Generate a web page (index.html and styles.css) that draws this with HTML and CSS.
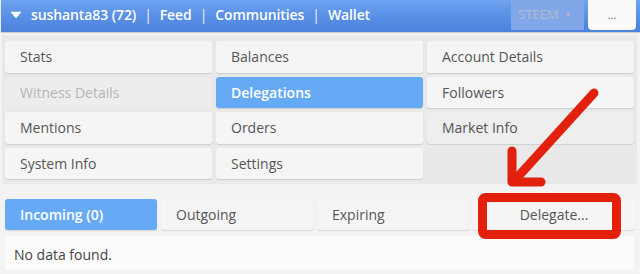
FILE: index.html
```html
<!DOCTYPE html>
<html>
<head>
<meta charset="utf-8">
<link rel="stylesheet" href="styles.css">
</head>
<body>
<header class="topbar">
  <nav class="crumbs">
    <svg class="caret" width="12" height="8" viewBox="0 0 12 8"><path d="M1 1.5 Q0.5 0.8 1.4 0.8 H10.6 Q11.5 0.8 11 1.5 L6.6 6.8 Q6 7.5 5.4 6.8 Z" fill="#fff"/></svg>
    <span>sushanta83 (72)</span><span class="sep">|</span><span>Feed</span><span class="sep">|</span><span>Communities</span><span class="sep">|</span><span>Wallet</span>
  </nav>
  <div class="coin">STEEM <span class="coin-caret">▾</span></div>
  <div class="more">...</div>
</header>

<section class="menu-panel">
  <div class="btn">Stats</div>
  <div class="btn">Balances</div>
  <div class="btn">Account Details</div>
  <div class="btn disabled">Witness Details</div>
  <div class="btn active">Delegations</div>
  <div class="btn">Followers</div>
  <div class="btn">Mentions</div>
  <div class="btn">Orders</div>
  <div class="btn hover">Market Info</div>
  <div class="btn">System Info</div>
  <div class="btn">Settings</div>
  <div class="empty"></div>
</section>

<section class="tabs">
  <div class="btn active">Incoming (0)</div>
  <div class="btn">Outgoing</div>
  <div class="btn">Expiring</div>
  <div class="btn center">Delegate...</div>
</section>

<div class="content">No data found.</div>

<svg class="annot" width="640" height="274" viewBox="0 0 640 274">
  <g stroke="#e2200c" stroke-width="9" stroke-linecap="round" stroke-linejoin="round" fill="none">
    <line x1="594" y1="93" x2="515" y2="180"/>
    <polyline points="512,151 512,182 541,182"/>
    <rect x="482.5" y="197.5" width="134" height="37" rx="3"/>
  </g>
</svg>
</body>
</html>
```

FILE: styles.css
```css
* { box-sizing: border-box; }
html, body { margin: 0; padding: 0; }
body {
  width: 640px;
  height: 274px;
  overflow: hidden;
  background: #f3f3f3;
  font-family: "Open Sans", "Noto Sans", sans-serif;
  font-size: 14px;
  color: #555;
  position: relative;
}
.topbar {
  height: 32px;
  margin-left: 1px;
  display: flex;
  align-items: stretch;
  background: linear-gradient(180deg, #6ea4f0 0%, #5a90e6 50%, #4d82dd 100%);
  box-shadow: 0 1px 1px rgba(0,0,0,0.15);
}
.crumbs {
  flex: 1;
  display: flex;
  align-items: center;
  padding-left: 9px;
  padding-bottom: 4px;
  color: #fff;
  font-weight: 600;
  font-size: 14px;
  letter-spacing: -0.1px;
  white-space: pre;
}
.caret { margin-right: 9px; margin-top: 1px; }
.sep { margin: 0 8px; font-weight: 400; opacity: 0.9; }
.coin {
  width: 73px;
  display: flex;
  align-items: center;
  padding-left: 7px;
  padding-bottom: 3px;
  background: #82a7e8;
  color: #b3bacb;
  font-size: 13px;
  margin-bottom: 2px;
}
.coin-caret { font-size: 8px; margin-left: 8px; color: #b3bacb; }
.more {
  width: 48px;
  margin: 0 4px 2px 4px;
  background: #fafafa;
  border-radius: 0 0 4px 4px;
  display: flex;
  align-items: center;
  justify-content: center;
  color: #666;
  font-size: 11px;
  padding-bottom: 2px;
}
.menu-panel {
  margin: 3px 3px 0 2px;
  padding: 6px 3px 5px 3px;
  background: #e9e9e9;
  display: grid;
  grid-template-columns: repeat(3, 1fr);
  grid-auto-rows: 31.5px;
  column-gap: 4px;
  row-gap: 4px;
}
.btn {
  background: #f5f5f5;
  border-radius: 3px;
  box-shadow: 0 1px 1px rgba(0,0,0,0.12);
  display: flex;
  align-items: center;
  padding-left: 15px;
  color: #555;
  white-space: nowrap;
}
.btn.disabled { background: #ededed; color: #b5b5b5; box-shadow: none; }
.btn.active { background: #66aaf6; color: #fff; font-weight: 600; }
.btn.hover { background: #eeeeee; }
.btn.center { justify-content: center; padding-left: 0; }
.tabs {
  margin-top: 15px;
  padding: 0 5px;
  display: grid;
  grid-template-columns: 152px 152px 152px 1fr;
  grid-auto-rows: 31px;
  column-gap: 4px;
}
.content {
  margin: 6px 6px 0 5px;
  height: 34px;
  background: #fbfbfb;
  display: flex;
  align-items: center;
  padding-left: 9px;
  padding-top: 2px;
  color: #444;
}
.annot {
  position: absolute;
  left: 0;
  top: 0;
  pointer-events: none;
}
```
